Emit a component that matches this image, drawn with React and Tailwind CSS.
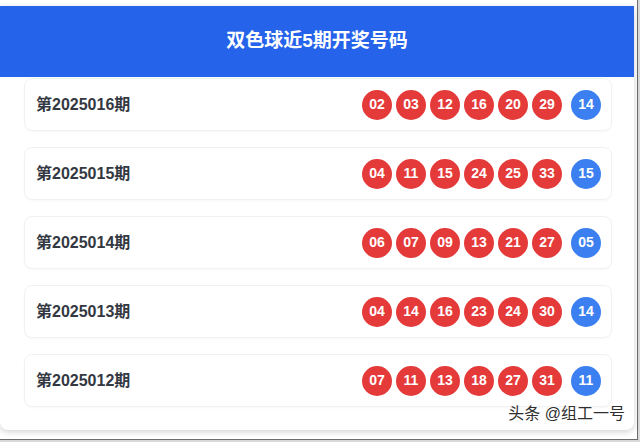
import React from "react";

const draws = [
  { issue: "2025016", red: ["02", "03", "12", "16", "20", "29"], blue: "14" },
  { issue: "2025015", red: ["04", "11", "15", "24", "25", "33"], blue: "15" },
  { issue: "2025014", red: ["06", "07", "09", "13", "21", "27"], blue: "05" },
  { issue: "2025013", red: ["04", "14", "16", "23", "24", "30"], blue: "14" },
  { issue: "2025012", red: ["07", "11", "13", "18", "27", "31"], blue: "11" },
];

const font = { fontFamily: '"Liberation Sans", "Noto Sans CJK SC", sans-serif' };

const Ball = ({ num, blue }) => (
  <span
    className={`flex h-[30px] w-[30px] items-center justify-center rounded-full text-[14px] font-bold text-white ${
      blue ? "ml-[5px] bg-[#3b7ff0]" : "bg-[#e53a3a]"
    }`}
  >
    {num}
  </span>
);

const DrawRow = ({ draw }) => (
  <div className="flex h-[53px] items-center justify-between rounded-lg border border-[#f0f1f3] bg-white pl-[11px] pr-[10px] shadow-[0_1px_2px_rgba(0,0,0,0.03)]">
    <span className="text-[16px] font-bold text-[#333842]">第{draw.issue}期</span>
    <div className="flex items-center gap-1">
      {draw.red.map((n, i) => (
        <Ball key={i} num={n} />
      ))}
      <Ball num={draw.blue} blue />
    </div>
  </div>
);

export default function App() {
  return (
    <div className="h-[442px] w-[640px] bg-[#d9d9d9]" style={font}>
      <div className="h-[440px] w-[638px] border-r border-b border-[#6b6b6b] bg-white pt-[6px]">
        <div className="relative h-[424px] w-[634px] overflow-hidden rounded-b-lg bg-white shadow-[0_2px_6px_rgba(0,0,0,0.18)]">
          <div className="flex h-[71px] items-center justify-center bg-[#2563eb]">
            <h1 className="text-[19px] font-bold text-white">双色球近5期开奖号码</h1>
          </div>
          <div className="flex flex-col gap-4 pl-6 pr-[22px] pt-px">
            {draws.map((d) => (
              <DrawRow key={d.issue} draw={d} />
            ))}
          </div>
          <span className="absolute right-[9px] bottom-[4px] text-[16px] text-[#2f2f2f] [text-shadow:0_0_2px_#fff]">
            头条 @组工一号
          </span>
        </div>
      </div>
    </div>
  );
}
